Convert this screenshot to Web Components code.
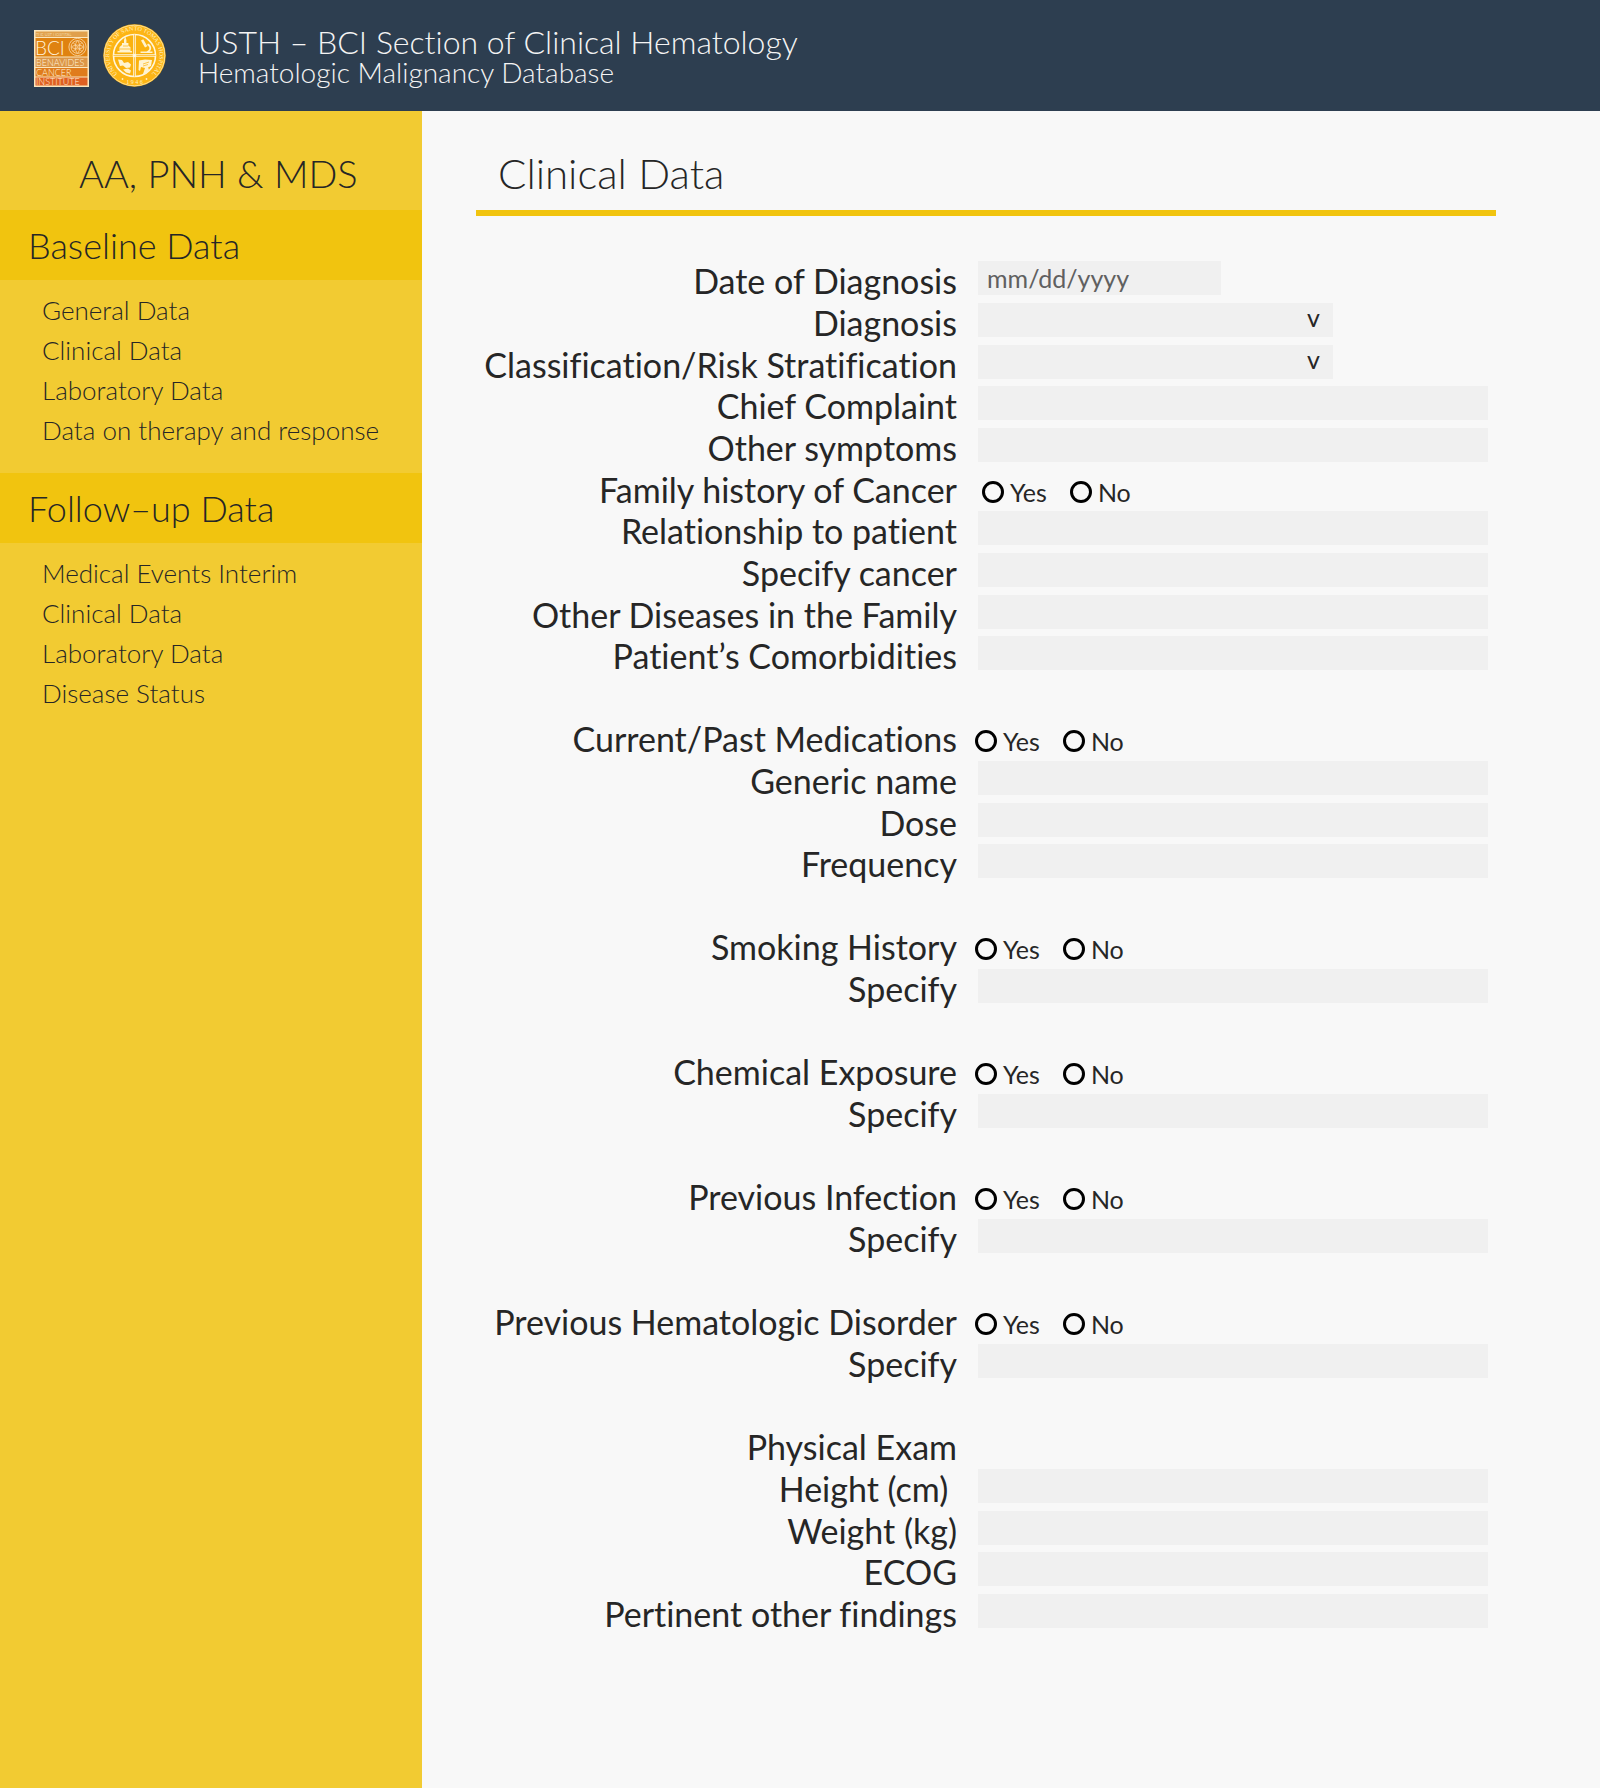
<!DOCTYPE html>
<html lang="en">
<head>
<meta charset="utf-8">
<meta name="viewport" content="width=device-width, initial-scale=1">
<title>Hematologic Malignancy Database</title>
<style>
  html, body { margin: 0; min-height: 100%; }
  body {
    display: flex;
    min-height: 100vh;
    background: #f8f8f8;
    color: #262626;
    font-family: Lato, "Open Sans", sans-serif;
    font-variant-ligatures: none;
  }
  app-shell { flex: 1; }
</style>
</head>
<body>
<app-shell>
  <site-header slot="header">
    USTH – BCI Section of Clinical Hematology
    <span slot="subtitle">Hematologic Malignancy Database</span>
  </site-header>

  <side-nav slot="nav" heading="AA, PNH &amp; MDS">
    <nav-group heading="Baseline Data">
      <nav-item>General Data</nav-item>
      <nav-item>Clinical Data</nav-item>
      <nav-item>Laboratory Data</nav-item>
      <nav-item>Data on therapy and response</nav-item>
    </nav-group>
    <nav-group heading="Follow–up Data">
      <nav-item>Medical Events Interim</nav-item>
      <nav-item>Clinical Data</nav-item>
      <nav-item>Laboratory Data</nav-item>
      <nav-item>Disease Status</nav-item>
    </nav-group>
  </side-nav>

  <data-form heading="Clinical Data">
    <form-section style="--choice-indent: 4px">
      <form-field type="date">Date of Diagnosis</form-field>
      <form-field type="select">Diagnosis</form-field>
      <form-field type="select">Classification/Risk Stratification</form-field>
      <form-field>Chief Complaint</form-field>
      <form-field>Other symptoms</form-field>
      <form-field type="choice">Family history of Cancer</form-field>
      <form-field>Relationship to patient</form-field>
      <form-field>Specify cancer</form-field>
      <form-field>Other Diseases in the Family</form-field>
      <form-field>Patient’s Comorbidities</form-field>
    </form-section>
    <form-section>
      <form-field type="choice">Current/Past Medications</form-field>
      <form-field>Generic name</form-field>
      <form-field>Dose</form-field>
      <form-field>Frequency</form-field>
    </form-section>
    <form-section>
      <form-field type="choice">Smoking History</form-field>
      <form-field>Specify</form-field>
    </form-section>
    <form-section>
      <form-field type="choice">Chemical Exposure</form-field>
      <form-field>Specify</form-field>
    </form-section>
    <form-section>
      <form-field type="choice">Previous Infection</form-field>
      <form-field>Specify</form-field>
    </form-section>
    <form-section>
      <form-field type="choice">Previous Hematologic Disorder</form-field>
      <form-field>Specify</form-field>
    </form-section>
    <form-section>
      <form-field type="none">Physical Exam</form-field>
      <form-field>Height (cm)&nbsp;</form-field>
      <form-field>Weight (kg)</form-field>
      <form-field>ECOG</form-field>
      <form-field>Pertinent other findings</form-field>
    </form-section>
  </data-form>
</app-shell>

<script>
class BaseElement extends HTMLElement {
  constructor() {
    super();
    this.attachShadow({ mode: 'open' });
  }
  connectedCallback() {
    this.shadowRoot.innerHTML = this.render();
  }
}

customElements.define('app-shell', class extends BaseElement {
  render() {
    return `
      <style>
        :host { display: flex; flex-direction: column; }
        .body { flex: 1; display: flex; }
        .nav { flex: 0 0 422px; display: flex; background: #f2cb32; }
        main { flex: 1; min-width: 0; }
      </style>
      <slot name="header"></slot>
      <div class="body">
        <div class="nav"><slot name="nav"></slot></div>
        <main><slot></slot></main>
      </div>`;
  }
});

customElements.define('site-header', class extends BaseElement {
  render() {
    return `
      <style>
        :host {
          display: flex; align-items: center; box-sizing: border-box;
          min-height: 111px; padding: 0 34px;
          background: #2d3e50; color: #f4f4f4; font-weight: 300;
        }
        .logos { display: flex; align-items: flex-end; gap: 14px; margin-right: 32px; }
        h1, p { margin: 0; font-weight: inherit; }
        h1 { font-size: 32px; line-height: 32px; }
        p { font-size: 28px; line-height: 28px; }
      </style>
      <div class="logos"><bci-logo></bci-logo><usth-seal></usth-seal></div>
      <div>
        <h1><slot></slot></h1>
        <p><slot name="subtitle"></slot></p>
      </div>`;
  }
});

customElements.define('bci-logo', class extends BaseElement {
  render() {
    return `
      <style>:host, svg { display: block; }</style>
      <svg width="55" height="57" viewBox="0 0 55 57" role="img" aria-label="Benavides Cancer Institute"
           fill="#fff3dc" font-family="Lato, sans-serif">
        <rect width="55" height="57" fill="#fbe6bd"/>
        <rect x="1.5" y="1.5" width="52" height="5.5" fill="#e0a04c"/>
        <rect x="1.5" y="8" width="52" height="18.5" fill="#df8210"/>
        <rect x="1.5" y="27.5" width="52" height="9.5" fill="#dc9648"/>
        <rect x="1.5" y="38" width="52" height="8.5" fill="#e07c1c"/>
        <rect x="1.5" y="47.5" width="52" height="8" fill="#df6022"/>
        <text x="2" y="6" font-size="4">THE UST HOSPITAL</text>
        <text x="1" y="24.5" font-size="19">BCI</text>
        <text x="2" y="35.5" font-size="9">BENAVIDES</text>
        <text x="2" y="45.5" font-size="9">CANCER</text>
        <text x="2" y="54.5" font-size="9">INSTITUTE</text>
        <g fill="none" stroke="#fbdcae" stroke-width="0.8">
          <circle cx="43.5" cy="17" r="8.6"/>
          <circle cx="43.5" cy="17" r="6.4"/>
          <path d="M39 12.5l9 9M48 12.5l-9 9M43.5 10.6c3 3 3 9.800 0 12.800c-3-3-3-9.800 0-12.800M37.500 17c3-2.600 9-2.600 12 0c-3 2.600-9 2.600-12 0"/>
        </g>
      </svg>`;
  }
});

customElements.define('usth-seal', class extends BaseElement {
  render() {
    return `
      <style>:host, svg { display: block; }</style>
      <svg width="63" height="63" viewBox="0 0 63 63" role="img" aria-label="University of Santo Tomas Hospital">
        <circle cx="31.500" cy="31.500" r="31.200" fill="#fdb515"/>
        <circle cx="31.500" cy="31.500" r="30.300" fill="none" stroke="#fde3a0" stroke-width="0.900"/>
        <circle cx="31.500" cy="31.500" r="21" fill="#fbb20f" stroke="#fff6dc" stroke-width="1.600"/>
        <path d="M31.500 10.500v42M10.500 31.500h42" stroke="#fff6dc" stroke-width="2.600"/>
        <path d="M31.500 10.500v42M10.500 31.500h42" stroke="#fbb20f" stroke-width="0.700"/>
        <circle cx="31.500" cy="31.500" r="1.800" fill="#fff6dc"/>
        <g fill="#fff3d0">
          <path d="M14.500 28.500v-1.500h2v-4l2.500-2v-2h2v-3l1.200-3.500l1.200 3.500v3h2v3l2 1v4h1.500v1.500z"/>
          <path d="M38 16.500l2.300-1.300l4 7l-2.300 1.300zM45 19.500c4 2 4 6 1.500 8h3v1.500h-12v-1.500h6c4-1.500 3.500-5 .5-6.500z"/>
          <path d="M15 35.500l4 .5l2 3l4-1l3 2.500l-1 3l-4 .5l-3-2.500l-3 .5zM20 45.500l5-1l3 2l-1 3l-4-1z"/>
          <path d="M36 36.500l6-1l7 .5l-1 6l-3 1.500l1 2l-3 4l-3 .5l2-6l-4-1l-1 4l-1.500-1z"/>
        </g>
        <path d="M17 25h10M20 22h5M40 40l6-2M40 42l5-1.500" stroke="#fbb20f" stroke-width="0.700"/>
        <path id="arc" d="M17.190 51.940A24.950 24.950 0 1 1 45.810 51.940" fill="none"/>
        <g fill="#fff0c4" font-family="'Liberation Serif', serif" font-size="6">
          <text text-anchor="middle"><textPath href="#arc" startOffset="50%">UNIVERSITY OF SANTO TOMAS HOSPITAL</textPath></text>
          <text x="31.500" y="59.500" text-anchor="middle">1 9 4 6</text>
          <circle cx="19.500" cy="55" r="0.900"/>
          <circle cx="43.500" cy="55" r="0.900"/>
        </g>
      </svg>`;
  }
});

customElements.define('side-nav', class extends BaseElement {
  render() {
    return `
      <style>
        :host { display: block; flex: 1; font-weight: 300; }
        h2 {
          margin: 0; padding: 38px 0 13px 79px;
          font-size: 38px; line-height: 48px; font-weight: inherit;
        }
      </style>
      <nav>
        <h2>${this.getAttribute('heading').replace('&', '&amp;')}</h2>
        <slot></slot>
      </nav>`;
  }
});

customElements.define('nav-group', class extends BaseElement {
  render() {
    return `
      <style>
        :host { display: block; }
        h3 {
          margin: 0; padding-left: 28px; background: #f1c40f;
          font-size: 36px; line-height: 70px; font-weight: inherit;
        }
        div { padding: 10px 0 23px 42px; }
      </style>
      <h3>${this.getAttribute('heading')}</h3>
      <div role="list"><slot></slot></div>`;
  }
});

customElements.define('nav-item', class extends BaseElement {
  render() {
    this.setAttribute('role', 'listitem');
    return `
      <style>
        :host { display: block; }
        a { color: inherit; text-decoration: none; font-size: 26px; line-height: 40px; }
        a:hover { text-decoration: underline; }
      </style>
      <a href="#"><slot></slot></a>`;
  }
});

customElements.define('data-form', class extends BaseElement {
  render() {
    return `
      <style>
        :host { display: block; padding: 0 104px 60px 54px; }
        h2 {
          margin: 0; padding: 38px 0 13px 22px; border-bottom: 6px solid #f1c40f;
          font-size: 42px; line-height: 48px; font-weight: 300;
        }
        form { display: grid; gap: 41px; padding: 44px 8px 0 0; }
      </style>
      <h2>${this.getAttribute('heading')}</h2>
      <form><slot></slot></form>`;
  }
});

customElements.define('form-section', class extends BaseElement {
  render() {
    return `
      <style>:host { display: grid; grid-auto-rows: 42px 42px 41px; }</style>
      <slot></slot>`;
  }
});

customElements.define('form-field', class extends BaseElement {
  control(type) {
    switch (type) {
      case 'date':
        return '<input class="box date" id="control" type="text" placeholder="mm/dd/yyyy">';
      case 'select':
        return `<div class="picker">
          <select class="box" id="control"><option></option></select>
          <span class="arrow" aria-hidden="true">v</span>
        </div>`;
      case 'choice':
        return `<div class="choices" role="radiogroup" aria-labelledby="title">
          <label><input type="radio" name="answer">Yes</label>
          <label><input type="radio" name="answer">No</label>
        </div>`;
      case 'none':
        return '';
      default:
        return '<input class="box" id="control" type="text">';
    }
  }
  render() {
    const type = this.getAttribute('type') || 'text';
    const title = type === 'choice' || type === 'none'
      ? '<span class="title" id="title"><slot></slot></span>'
      : '<label class="title" for="control"><slot></slot></label>';
    return `
      <style>
        :host {
          display: grid; align-items: start; column-gap: 21px;
          grid-template-columns: minmax(481px, 12fr) minmax(0, 13fr);
        }
        .title { font-size: 34px; line-height: 42px; text-align: right; white-space: nowrap; }
        .box {
          display: block; box-sizing: border-box; width: 100%; height: 34px;
          margin: 1px 0 0; padding: 0 9px; border: 0; border-radius: 0;
          background: #f0f0f0; color: inherit; font: 25px Lato, sans-serif;
          appearance: none;
        }
        .box::placeholder { color: #606060; opacity: 1; }
        .date { max-width: 243px; }
        .picker { display: grid; max-width: 355px; }
        .picker > * { grid-area: 1 / 1; }
        .arrow {
          justify-self: end; margin-top: 1px; padding-right: 13px; pointer-events: none;
          font-size: 25px; line-height: 28px;
        }
        .choices {
          display: flex; gap: 23px; padding-top: 6px;
          margin-left: var(--choice-indent, -3px);
        }
        .choices label { display: flex; align-items: center; gap: 6px; font-size: 25px; line-height: 34px; }
        .choices input {
          appearance: none; box-sizing: border-box; width: 22px; height: 22px;
          margin: 0; border: 3px solid #000; border-radius: 50%;
        }
        .choices input:checked { background: radial-gradient(#000 40%, transparent 45%); }
      </style>
      ${title}${this.control(type)}`;
  }
});
</script>
</body>
</html>
